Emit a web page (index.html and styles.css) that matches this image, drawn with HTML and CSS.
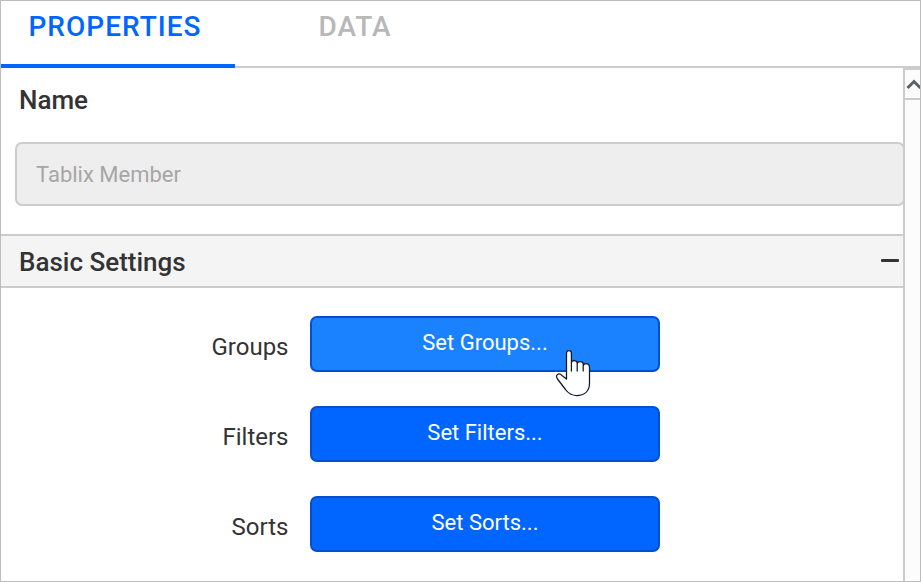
FILE: index.html
```html
<!DOCTYPE html>
<html lang="en">
<head>
<meta charset="utf-8">
<title>Properties</title>
<link rel="stylesheet" href="styles.css">
</head>
<body>
<div class="panel">
  <nav class="tabs">
    <a class="tab active"><span class="tab-text">PROPERTIES</span></a>
    <a class="tab"><span class="tab-text tab-data">DATA</span></a>
  </nav>
  <div class="body">
    <main class="content">
      <section class="name-section">
        <label class="title name-title" for="name"><span>Name</span></label>
        <div class="field" id="name"><span>Tablix Member</span></div>
      </section>
      <header class="section-head">
        <h2 class="title"><span>Basic Settings</span></h2>
        <svg class="minus" width="18" height="3" viewBox="0 0 18 3"><rect width="18" height="3" rx="1" fill="#333"/></svg>
      </header>
      <div class="rows">
        <div class="row">
          <span class="label">Groups</span>
          <div class="button hover"><span>Set Groups...</span>
            <svg class="cursor" width="36" height="48" viewBox="0 0 36 48"><path d="M11.5 30 V4 Q11.5 1.6 14 1.6 Q16.400 1.600 16.400 4 V22 V14 Q16.400 11.500 19 11.500 Q22.200 11.500 22.200 14 V22 V15 Q22.200 12.500 25 12.500 Q28.200 12.500 28.200 15 V22 V17 Q28.400 14.500 31 14.500 Q34.300 14.500 34.500 18 V34 C34.500 42 29.500 46.500 21.500 46.500 C15.500 46.500 13 44 10.500 40.500 L2.500 30 C-.5 25.500 4 23.500 7 26.500 Z" fill="#fff" stroke="#101828" stroke-width="1.25" stroke-linejoin="round"/></svg>
          </div>
        </div>
        <div class="row"><span class="label">Filters</span><div class="button"><span>Set Filters...</span></div></div>
        <div class="row"><span class="label">Sorts</span><div class="button"><span>Set Sorts...</span></div></div>
      </div>
    </main>
    <aside class="scrollbar">
      <div class="scroll-up"><svg width="15" height="28" viewBox="0 0 15 28"><path d="M2.500 18 L9 11.500 L15.500 18" fill="none" stroke="#5a5e66" stroke-width="3"/></svg></div>
    </aside>
  </div>
</div>
</body>
</html>
```

FILE: styles.css
```css
* { box-sizing: border-box; }
body { margin: 0; font-family: Roboto, "Liberation Sans", sans-serif; color: #333; background: #fff; }
.panel { width: 921px; height: 582px; border: 1px solid #bdbdbd; display: flex; flex-direction: column; overflow: hidden; }
.tabs { display: flex; flex: 0 0 67px; box-shadow: inset 0 -2px #ccc; }
.tab { width: 234px; padding: 9px 0 0 27.500px; font-size: 28px; line-height: 33px; font-weight: 500; letter-spacing: 1px; color: #b8b8b8; }
.tab.active { color: #06f; border-bottom: 4px solid #06f; }
.tab-data { margin-left: 56px; }
.body { display: flex; flex: 1; min-height: 0; }
.content { flex: 0 0 902px; min-width: 0; }
.name-section { height: 166px; padding: 17px 0 0 14px; }
.title { margin: 0; font-size: 26px; line-height: 30px; font-weight: 500; }
.name-title { display: block; padding-left: 4px; }
.field { width: 890px; height: 64px; margin-top: 27px; padding-left: 19px; border: 2px solid #ccc; border-radius: 7px; background: #eee; color: #a6a6a6; font-size: 22px; line-height: 61px; }
.section-head { display: flex; align-items: center; justify-content: space-between; height: 54px; padding: 0 4px 0 18px; border: solid #ccc; border-width: 2px 0; background: #f4f4f4; }
.section-head .title { padding-top: 2px; }
.minus { margin-bottom: 1px; }
.rows { display: flex; flex-direction: column; gap: 34px; padding-top: 28px; }
.row { display: flex; gap: 21.500px; height: 56px; }
.label { width: 287.500px; text-align: right; font-size: 24px; line-height: 62px; }
.button { position: relative; width: 350px; border: 2px solid #0250d0; border-radius: 7px; background: #06f; color: #fff; text-align: center; font-size: 22px; line-height: 49px; }
.button.hover { background: #1a82ff; }
.cursor { position: absolute; left: 243px; top: 31px; z-index: 1; }
.scrollbar { flex: 1; min-width: 0; border: solid #ccc; border-width: 2px 0 0 2px; background: #fcfcfc; position: relative; z-index: 1; }
.scroll-up { height: 30px; border-bottom: 2px solid #ccc; overflow: hidden; }
.scroll-up svg { display: block; }
```
